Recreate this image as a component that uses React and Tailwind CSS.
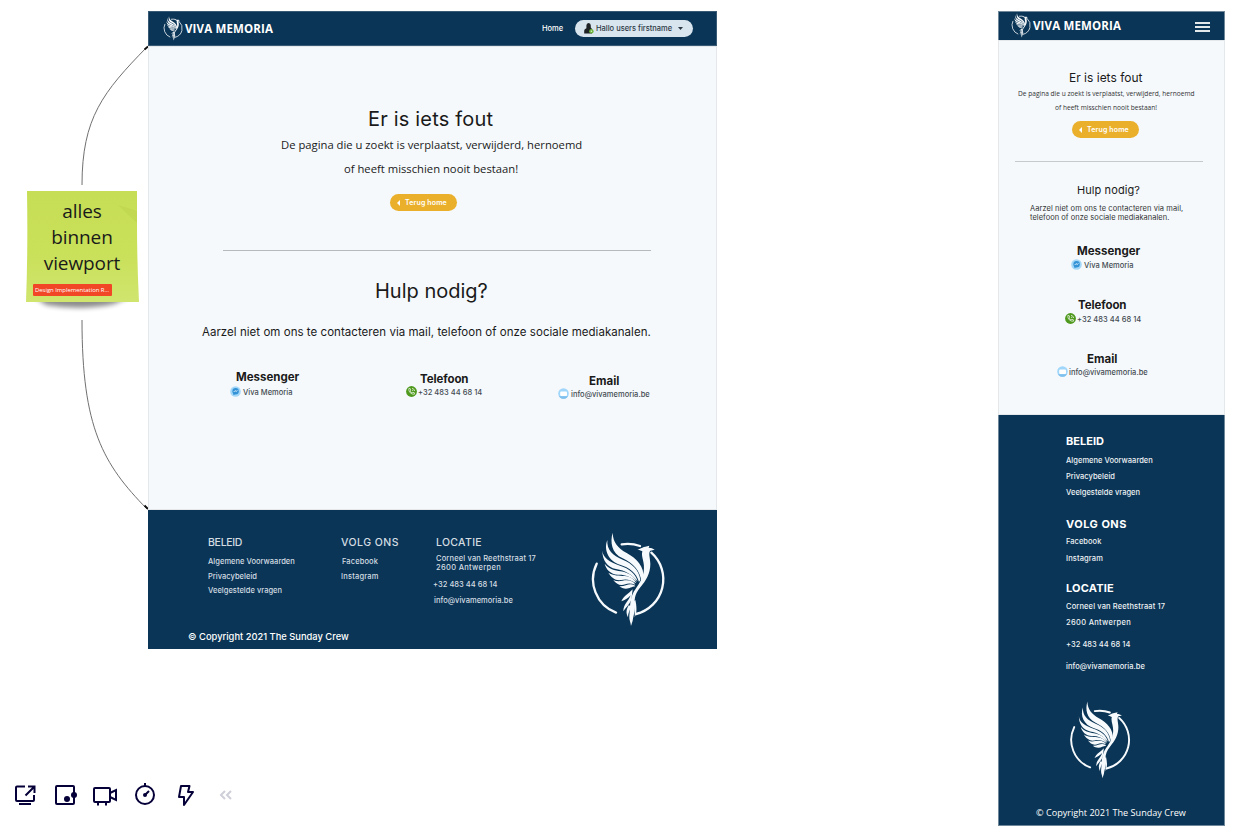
import React from "react";

function Phoenix({ className, ring = "7" }) {
  return (
    <svg viewBox="60 36 228 288" className={className} fill="#f7fafc">
      <g fill="none" stroke="#f7fafc" strokeWidth={ring} strokeLinecap="round">
        <path d="M80 131A107 107 0 0 0 138 278" />
        <path d="M244 98A107 107 0 0 1 198 282" />
        <path d="M155 73A107 107 0 0 1 210 78" />
      </g>
      <path d="M128 38C129 68 144 84 170 99C200 116 223 138 221 176L214 186C211 152 190 130 158 115C124 99 120 66 128 38Z" />
      <path d="M112 60C110 90 128 106 158 119C186 131 207 148 211 180L207 186C199 158 178 142 150 134C116 124 100 90 112 60Z" />
      <path d="M97 92C99 113 118 126 150 137C178 146 196 160 203 184C186 164 166 151 138 147C112 142 97 120 97 92Z" />
      <path d="M104 131C116 147 134 151 152 154C176 158 192 168 201 186C182 170 164 163 144 164C122 163 108 148 104 131Z" />
      <path d="M115 158C130 168 148 166 164 168C182 170 194 178 199 190C182 179 168 176 154 180C136 183 124 172 115 158Z" />
      <path d="M130 180C144 187 156 181 170 181C184 181 192 186 196 194C184 190 174 189 166 193C150 199 138 191 130 180Z" />
      <path d="M148 199C162 200 172 193 182 193C190 193 194 196 196 199C184 200 180 206 168 206C160 206 154 204 148 199Z" />
      <path d="M202 88C211 88 214 82 226 80L238 77L236 83C243 83 249 85 254 89L241 92C234 99 241 114 241 132C241 160 228 182 211 202C198 218 193 232 194 252C196 274 190 288 188 302L183 318C182 306 177 300 178 288C181 266 178 246 188 222C197 202 216 186 221 156C226 126 212 112 217 94Z" />
      <path d="M188 208C176 222 162 226 154 244C166 240 172 236 182 226C176 244 160 252 160 274C168 262 176 256 184 240Z" />
      <path d="M176 256C168 270 168 280 174 292C174 278 180 270 184 258ZM192 244C190 262 196 274 194 292C202 278 200 258 196 240Z" />
    </svg>
  );
}

function MessengerIcon({ className }) {
  return (
    <svg viewBox="0 0 11 11" className={className}>
      <circle cx="5.5" cy="5.5" r="5.3" fill="#a5d8f8" />
      <circle cx="5.6" cy="5.3" r="3.2" fill="#3393d6" />
      <path d="M3.4 7.2v2l1.8-1z" fill="#3393d6" />
      <path d="M3.7 6l1.4-1.4 1 .9 1.4-1" stroke="#fff" strokeWidth=".8" fill="none" />
    </svg>
  );
}

function PhoneIcon({ className }) {
  return (
    <svg viewBox="0 0 11 11" className={className}>
      <circle cx="5.5" cy="5.5" r="5.4" fill="#4f9a1e" />
      <path d="M2.8 2.6C2.6 6 5 8.4 8.4 8.2V6.8L6.8 6.3 6 7C5 6.6 4.4 6 4 5l.7-.8-.5-1.6z" fill="none" stroke="#fff" strokeWidth=".7" />
      <path d="M6 2.4c1.4.1 2.5 1.2 2.6 2.6M6 4c.6 0 1 .4 1 1" fill="none" stroke="#fff" strokeWidth=".7" />
    </svg>
  );
}

function MailIcon({ className }) {
  return (
    <svg viewBox="0 0 11 11" className={className}>
      <circle cx="5.5" cy="5.5" r="5.3" fill="#9fd6fa" />
      <path d="M1 8.3a5.3 5.3 0 0 0 9 0z" fill="#7fc0ec" />
      <rect x="2.2" y="3.4" width="6.8" height="4.5" rx="1" fill="#fff" />
    </svg>
  );
}

function BackButton({ className }) {
  return (
    <button className={"flex h-[17px] w-[67px] items-center rounded-full bg-[#eab02c] pl-[7px] " + className}>
      <svg viewBox="0 0 3 6" className="mr-[5px] h-[6px] w-[3px]">
        <path d="M3 0v6L0 3z" fill="#fff" />
      </svg>
      <span className="text-[7px] font-semibold leading-[17px] tracking-[0.15px] text-white">Terug home</span>
    </button>
  );
}

function Contact({ icon, title, titleClass, label, rowClass, gap = "ml-[2px]" }) {
  return (
    <div>
      <h3 className={"text-[11.5px] font-bold leading-[14px] text-[#1a1a1a] " + titleClass}>{title}</h3>
      <div className={"flex h-[11px] items-center " + rowClass}>
        {icon}
        <span className={"pt-px text-[7.5px] font-medium leading-[11px] tracking-[0.02px] text-[#444b52] " + gap}>{label}</span>
      </div>
    </div>
  );
}

function Desktop() {
  return (
    <section className="absolute left-[148px] top-[11px] flex h-[638px] w-[569px] flex-col bg-[#0a3556]">
      <header className="flex h-[35px] items-center shadow-[inset_0_0_0_1px_#385a75]">
        <Phoenix className="ml-[15px] h-[25px] w-[20px]" ring="9" />
        <span className="ml-[2px] w-[90px] font-['Open_Sans'] text-[11.5px] font-bold leading-[16px] tracking-[0.15px] text-white">VIVA MEMORIA</span>
        <span className="ml-[267px] w-[33px] pt-px text-[7.5px] font-medium text-white">Home</span>
        <div className="flex h-[17px] w-[118px] items-center rounded-full bg-[#d9e5ee] pl-[9px]">
          <svg viewBox="0 0 10 11" className="h-[11px] w-[10px]">
            <path d="M2.4 2.6a2.2 2.6 0 0 1 4.4 0v2L8 6v4.5H.2V8c0-1.600 1-2.400 2.200-2.800z" fill="#1f2326" />
            <circle cx="7.400" cy="8.300" r="2.200" fill="#6db33a" />
            <circle cx="7.400" cy="8.300" r=".8" fill="#dff0d0" />
          </svg>
          <span className="ml-[2px] w-[82px] pt-px text-[7.5px] font-medium text-[#2b3945]">Hallo users firstname</span>
          <svg viewBox="0 0 5 3" className="h-[3px] w-[5px]"><path d="M0 0h5L2.500 3z" fill="#2b3945" /></svg>
        </div>
      </header>
      <main className="h-[464px] bg-[#f5f9fc] text-[#1a1a1a] shadow-[inset_0_0_0_1px_#e4e8eb]">
        <h1 className="ml-[220px] pt-[59px] text-[20px] leading-[28px] tracking-[0.18px]">Er is iets fout</h1>
        <p className="ml-[133px] font-['Open_Sans'] text-[11.25px] leading-[24px]">De pagina die u zoekt is verplaatst, verwijderd, hernoemd</p>
        <p className="ml-[196px] font-['Open_Sans'] text-[11.25px] leading-[24px]">of heeft misschien nooit bestaan!</p>
        <BackButton className="ml-[242px] mt-[13px]" />
        <hr className="ml-[75px] mt-[39px] w-[428px] border-[#b5babd]" />
        <h2 className="ml-[227px] mt-[26px] text-[20px] leading-[28px]">Hulp nodig?</h2>
        <p className="ml-[54px] mt-[17px] text-[11.5px] leading-[20px] tracking-[0.04px]">Aarzel niet om ons te contacteren via mail, telefoon of onze sociale mediakanalen.</p>
        <div className="mt-[28px] flex">
          <div className="ml-[82px] w-[175px]">
            <Contact icon={<MessengerIcon className="size-[11px]" />} title="Messenger" titleClass="pl-[6px]" label="Viva Memoria" rowClass="mt-[2px]" />
          </div>
          <div className="ml-px w-[152px] pt-[2px]">
            <Contact icon={<PhoneIcon className="size-[11px]" />} title="Telefoon" titleClass="pl-[14px] tracking-[-0.1px]" label="+32 483 44 68 14" rowClass="" gap="ml-px" />
          </div>
          <div className="pt-[4px]">
            <Contact icon={<MailIcon className="size-[11px]" />} title="Email" titleClass="pl-[31px]" label="info@vivamemoria.be" rowClass="" />
          </div>
        </div>
      </main>
      <footer className="flex h-[139px] flex-col text-[7.5px] font-medium tracking-[0.03px] text-[#d5dde3]">
        <div className="flex h-[117px]">
          <div className="ml-[60px] w-[133px] pt-[25px]">
            <h4 className="text-[10.5px] font-medium leading-[15px] tracking-[-0.3px]">BELEID</h4>
            <p className="mt-[5px] leading-[14px]">Algemene Voorwaarden</p>
            <p className="mt-[1px] leading-[14px]">Privacybeleid</p>
            <p className="leading-[14px]">Veelgestelde vragen</p>
          </div>
          <div className="w-[95px] pt-[25px]">
            <h4 className="text-[10.5px] font-medium leading-[15px] tracking-[0.48px]">VOLG ONS</h4>
            <p className="mt-[5px] pl-px leading-[14px] tracking-[0.1px]">Facebook</p>
            <p className="mt-[1px] leading-[14px] tracking-[0.2px]">Instagram</p>
          </div>
          <div className="w-[154px] pt-[25px]">
            <h4 className="text-[10.5px] font-medium leading-[15px] tracking-[0.32px]">LOCATIE</h4>
            <p className="mt-[4px] leading-[9px] tracking-[0.16px]">Corneel van Reethstraat 17</p>
            <p className="leading-[9px] tracking-[0.32px]">2600 Antwerpen</p>
            <p className="-ml-[3px] mt-[6px] leading-[14px]">+32 483 44 68 14</p>
            <p className="-ml-[2px] mt-[2px] leading-[14px]">info@vivamemoria.be</p>
          </div>
          <Phoenix className="mt-[22px] h-[96px] w-[76px]" />
        </div>
        <p className="ml-[40px] mt-[3px] text-[9.35px] leading-[14px] tracking-normal text-white">© Copyright 2021 The Sunday Crew</p>
      </footer>
    </section>
  );
}

function Mobile() {
  return (
    <section className="absolute left-[998px] top-[11px] flex h-[815px] w-[227px] flex-col bg-[#0a3556] shadow-[inset_0_0_0_1px_#6e8799]">
      <header className="flex h-[29px] items-center">
        <Phoenix className="ml-[13px] h-[25px] w-[20px]" ring="9" />
        <span className="ml-[2px] w-[162px] font-['Open_Sans'] text-[11.5px] font-bold leading-[16px] tracking-[0.15px] text-white">VIVA MEMORIA</span>
        <svg viewBox="0 0 15 10" className="mt-[2px] h-[10px] w-[15px]">
          <path d="M0 1h15M0 5h15M0 9h15" stroke="#e3e8ea" strokeWidth="2" />
        </svg>
      </header>
      <main className="h-[375px] bg-[#f5f9fc] text-[#1a1a1a] shadow-[inset_0_0_0_1px_#e4e8eb]">
        <h1 className="ml-[71px] pt-[29px] text-[12px] leading-[18px]">Er is iets fout</h1>
        <p className="ml-[20px] font-['Open_Sans'] text-[6.6px] leading-[14px] text-[#333]">De pagina die u zoekt is verplaatst, verwijderd, hernoemd</p>
        <p className="ml-[57px] font-['Open_Sans'] text-[6.6px] leading-[13px] text-[#333]">of heeft misschien nooit bestaan!</p>
        <BackButton className="ml-[74px] mt-[7px]" />
        <hr className="ml-[17px] mt-[23px] w-[188px] border-[#c5cacd]" />
        <h2 className="ml-[79px] mt-[20px] text-[11px] leading-[16px] tracking-[0.09px]">Hulp nodig?</h2>
        <p className="ml-[32px] mt-[6px] text-[7.5px] leading-[9px] tracking-[0.07px] text-[#333]">Aarzel niet om ons te contacteren via mail,</p>
        <p className="ml-[32px] text-[7.5px] leading-[9px] tracking-[0.03px] text-[#333]">telefoon of onze sociale mediakanalen.</p>
        <div className="ml-[73px] mt-[22px]">
          <Contact icon={<MessengerIcon className="size-[11px]" />} title="Messenger" titleClass="pl-[6px]" label="Viva Memoria" rowClass="mt-[1px]" />
        </div>
        <div className="ml-[67px] mt-[28px]">
          <Contact icon={<PhoneIcon className="size-[11px]" />} title="Telefoon" titleClass="pl-[13px] tracking-[-0.1px]" label="+32 483 44 68 14" rowClass="mt-[1px]" gap="ml-px" />
        </div>
        <div className="ml-[59px] mt-[28px]">
          <Contact icon={<MailIcon className="size-[11px]" />} title="Email" titleClass="pl-[30px]" label="info@vivamemoria.be" rowClass="" gap="ml-px" />
        </div>
      </main>
      <footer className="flex flex-col pl-[68px] pt-[18px] text-[7.5px] font-medium leading-[14px] tracking-[0.03px] text-[#eef2f5]">
        <h4 className="text-[11px] font-bold leading-[16px] text-white">BELEID</h4>
        <p className="mt-[5px]">Algemene Voorwaarden</p>
        <p className="mt-[2px]">Privacybeleid</p>
        <p className="mt-[2px]">Veelgestelde vragen</p>
        <h4 className="mt-[16px] text-[11px] font-bold leading-[16px] tracking-[0.48px] text-white">VOLG ONS</h4>
        <p className="mt-[3px]">Facebook</p>
        <p className="mt-[3px] tracking-[0.12px]">Instagram</p>
        <h4 className="mt-[14px] text-[11px] font-bold leading-[16px] tracking-[0.2px] text-white">LOCATIE</h4>
        <p className="mt-[4px] tracking-[0.13px]">Corneel van Reethstraat 17</p>
        <p className="mt-[2px] tracking-[0.32px]">2600 Antwerpen</p>
        <p className="mt-[8px]">+32 483 44 68 14</p>
        <p className="mt-[8px]">info@vivamemoria.be</p>
        <Phoenix className="ml-[2px] mt-[27px] h-[79px] w-[64px]" />
        <p className="-ml-[30px] mt-[26px] font-['Open_Sans'] text-[9.1px] font-normal tracking-normal text-white">© Copyright 2021 The Sunday Crew</p>
      </footer>
    </section>
  );
}

function StickyNote() {
  return (
    <div className="absolute left-[26px] top-[191px] h-[122px] w-[114px]">
      <svg viewBox="0 0 114 122" className="absolute inset-0 h-[122px] w-[114px]">
        <defs>
          <linearGradient id="note" x1="0" y1="0" x2="0" y2="1">
            <stop offset="0" stopColor="#c6de55" />
            <stop offset=".55" stopColor="#c9e059" />
            <stop offset="1" stopColor="#d0e56e" />
          </linearGradient>
          <filter id="soft" x="-20%" y="-100%" width="140%" height="300%"><feGaussianBlur stdDeviation="2.500" /></filter>
        </defs>
        <path d="M9 106H103L88 113Q56 120 20 114Z" fill="#000" opacity=".45" filter="url(#soft)" />
        <path d="M1 0H111V34Q111 70 113 111H0Q2 60 1 0Z" fill="url(#note)" />
        <path d="M92 14L111 32V20Z" fill="#bcd34c" opacity=".6" />
      </svg>
      <div className="relative flex flex-col items-start pt-[7px]">
        <p className="w-full pr-[2px] text-center font-['Open_Sans'] text-[19px] leading-[26px] tracking-[-0.1px] text-[#1a1a1a]">
          alles<br />binnen<br />viewport
        </p>
        <span className="ml-[7px] mt-[8px] flex h-[12px] w-[79px] items-center rounded-[1px] bg-[#f24726] pl-[2px] font-['Open_Sans'] text-[6px] tracking-[-0.05px] text-white">Design Implementation R...</span>
      </div>
    </div>
  );
}

function Toolbar() {
  return (
    <nav className="absolute left-[13px] top-[783px] flex items-center gap-[16px]">
      <svg viewBox="0 0 24 24" className="size-[24px]" fill="none" stroke="#050038" strokeWidth="2">
        <path d="M12 3.500H4a1 1 0 0 0-1 1V17a1 1 0 0 0 1 1h16a1 1 0 0 0 1-1v-5M6 21h12M12.500 12.500L21 4M15 3.500h6.500V10" />
      </svg>
      <svg viewBox="0 0 24 24" className="size-[24px]" fill="none" stroke="#050038" strokeWidth="2">
        <rect x="3" y="3" width="18" height="18" rx="1" />
        <circle cx="14" cy="16" r="3" fill="#050038" stroke="none" /><circle cx="21" cy="12" r="3" fill="#050038" stroke="none" />
      </svg>
      <svg viewBox="0 0 26 24" className="-mr-[2px] h-[24px] w-[26px]" fill="none" stroke="#050038" strokeWidth="2">
        <rect x="1" y="5" width="16" height="14" rx="1" /><path d="M17 10L23 7v10l-6-3M5 19v3.500M13 19v3.500" />
      </svg>
      <svg viewBox="0 0 24 24" className="size-[24px]" fill="none" stroke="#050038" strokeWidth="2">
        <circle cx="12" cy="12" r="9" /><path d="M12 0v4M12 12l4-4" /><circle cx="12" cy="12" r="1" fill="#050038" />
      </svg>
      <svg viewBox="0 0 24 24" className="size-[24px]" fill="none" stroke="#050038" strokeWidth="2" strokeLinejoin="round">
        <path d="M8 3H16.500L15 9H20L11 22V14H6Z" />
      </svg>
      <svg viewBox="0 0 24 24" className="ml-px size-[24px]" fill="none" stroke="#cfcfd9" strokeWidth="2">
        <path d="M11 8l-4 4 4 4M17 8l-4 4 4 4" />
      </svg>
    </nav>
  );
}

export default function App() {
  return (
    <div className="relative h-[830px] w-[1243px] overflow-hidden whitespace-nowrap bg-white font-[Inter,sans-serif]">
      <svg viewBox="0 0 160 520" className="absolute left-0 top-0 h-[520px] w-[160px]" fill="none" stroke="#707070">
        <path d="M82 185C82 118 103 92 147 47M82 320C82 428 103 464 147 509" />
        <path d="M144.500 49.500L148 46.500M144.500 505.500L148 509" stroke="#111" strokeWidth="1.800" />
      </svg>
      <StickyNote />
      <Desktop />
      <Mobile />
      <Toolbar />
    </div>
  );
}
